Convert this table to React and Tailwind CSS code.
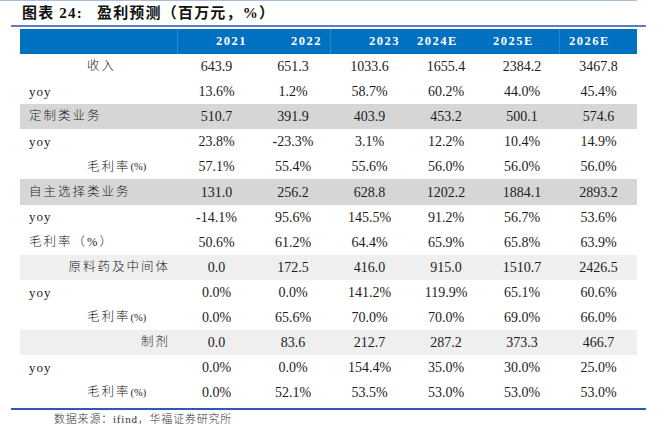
import React from "react";

const HEAD = [
  { t: "2021", right: true },
  { t: "2022", right: true },
  { t: "2023", right: true },
  { t: "2024E", right: false },
  { t: "2025E", right: false },
  { t: "2026E", right: false },
];

// label kinds: "c" 收入, "l" left, "m" indented 毛利率(%), "r" right aligned, "y" yoy
const ROWS = [
  { label: "收入", kind: "c", vals: ["643.9", "651.3", "1033.6", "1655.4", "2384.2", "3467.8"] },
  { label: "yoy", kind: "y", vals: ["13.6%", "1.2%", "58.7%", "60.2%", "44.0%", "45.4%"] },
  { label: "定制类业务", kind: "l", bg: "dark", vals: ["510.7", "391.9", "403.9", "453.2", "500.1", "574.6"] },
  { label: "yoy", kind: "y", vals: ["23.8%", "-23.3%", "3.1%", "12.2%", "10.4%", "14.9%"] },
  { label: "毛利率", kind: "m", vals: ["57.1%", "55.4%", "55.6%", "56.0%", "56.0%", "56.0%"] },
  { label: "自主选择类业务", kind: "l", bg: "dark", vals: ["131.0", "256.2", "628.8", "1202.2", "1884.1", "2893.2"] },
  { label: "yoy", kind: "y", vals: ["-14.1%", "95.6%", "145.5%", "91.2%", "56.7%", "53.6%"] },
  { label: "毛利率（%）", kind: "l", vals: ["50.6%", "61.2%", "64.4%", "65.9%", "65.8%", "63.9%"] },
  { label: "原料药及中间体", kind: "r", bg: "light", vals: ["0.0", "172.5", "416.0", "915.0", "1510.7", "2426.5"] },
  { label: "yoy", kind: "y", vals: ["0.0%", "0.0%", "141.2%", "119.9%", "65.1%", "60.6%"] },
  { label: "毛利率", kind: "m", vals: ["0.0%", "65.6%", "70.0%", "70.0%", "69.0%", "66.0%"] },
  { label: "制剂", kind: "r", bg: "light", vals: ["0.0", "83.6", "212.7", "287.2", "373.3", "466.7"] },
  { label: "yoy", kind: "y", vals: ["0.0%", "0.0%", "154.4%", "35.0%", "30.0%", "25.0%"] },
  { label: "毛利率", kind: "m", vals: ["0.0%", "52.1%", "53.5%", "53.0%", "53.0%", "53.0%"] },
];

const GRID = "grid grid-cols-[158px_77px_76px_77px_76px_76px_77px]";
const CJK = "font-['Liberation_Serif','Noto_Sans_CJK_SC',serif]";

function Label({ label, kind }) {
  if (kind === "y") {
    return (
      <div className="flex items-center pl-[9px] font-['Liberation_Serif',serif] text-[13px] tracking-[1px]">
        {label}
      </div>
    );
  }
  if (kind === "m") {
    return (
      <div className={`flex items-center pl-[67px] ${CJK} text-[12.5px] font-light`}>
        <span className="tracking-[2px]">{label}</span>
        <span className="font-['Liberation_Serif',serif] text-[10.5px] font-normal">(%)</span>
      </div>
    );
  }
  const pad =
    kind === "c" ? "pl-[67px]" : kind === "r" ? "justify-end pr-[8px]" : "pl-[9px]";
  return (
    <div className={`flex items-center ${pad} ${CJK} text-[12.5px] tracking-[2px] font-light`}>
      {label}
    </div>
  );
}

export default function App() {
  return (
    <div className="w-[665px] h-[434px] bg-white overflow-hidden text-[#1c1c1c]">
      {/* top rule */}
      <div className="w-[637px] h-px bg-[#a8bce0]" />

      {/* title */}
      <div className={`h-[24px] pl-[22px] flex items-center ${CJK} text-[15px] font-bold text-[#111] tracking-[1.2px]`}>
        <span>图表 24:</span>
        <span className="ml-[14px]">盈利预测（百万元，%）</span>
      </div>
      <div className="ml-[11px] w-[635px] h-[2px] bg-[#5b7fc0]" />

      {/* table */}
      <div className="ml-[20px] mt-[2px] w-[617px]">
        <div className={`${GRID} h-[25px] bg-[#0070c0] text-white font-['Liberation_Serif',serif] text-[12.5px] font-bold tracking-[1.5px]`}>
          <div className="border-r border-[#2a86cc]" />
          {HEAD.map((h, i) => (
            <div
              key={h.t}
              className={`flex items-center ${h.right ? "justify-end pr-[8px]" : "pl-[9px]"} ${
                i === 1 || i === 4 ? "border-r border-[#2a86cc]" : ""
              }`}
            >
              {h.t}
            </div>
          ))}
        </div>

        {ROWS.map((r, i) => (
          <div
            key={i}
            className={`${GRID} h-[25.1px] ${
              r.bg === "dark" ? "bg-[#d6d6d6]" : r.bg === "light" ? "bg-[#efefef]" : "bg-white"
            }`}
          >
            <Label label={r.label} kind={r.kind} />
            {r.vals.map((v, j) => (
              <div
                key={j}
                className="flex items-center justify-center font-['Liberation_Serif',serif] text-[14px]"
              >
                {v}
              </div>
            ))}
          </div>
        ))}
      </div>

      {/* bottom rule */}
      <div className="ml-[11px] mt-[3px] w-[635px] h-[2px] bg-[#2f5ca8]" />

      {/* source */}
      <div className={`pl-[54px] mt-px ${CJK} text-[11px] tracking-[0.8px] text-[#333] font-light`}>
        数据来源：ifind，华福证券研究所
      </div>
    </div>
  );
}
